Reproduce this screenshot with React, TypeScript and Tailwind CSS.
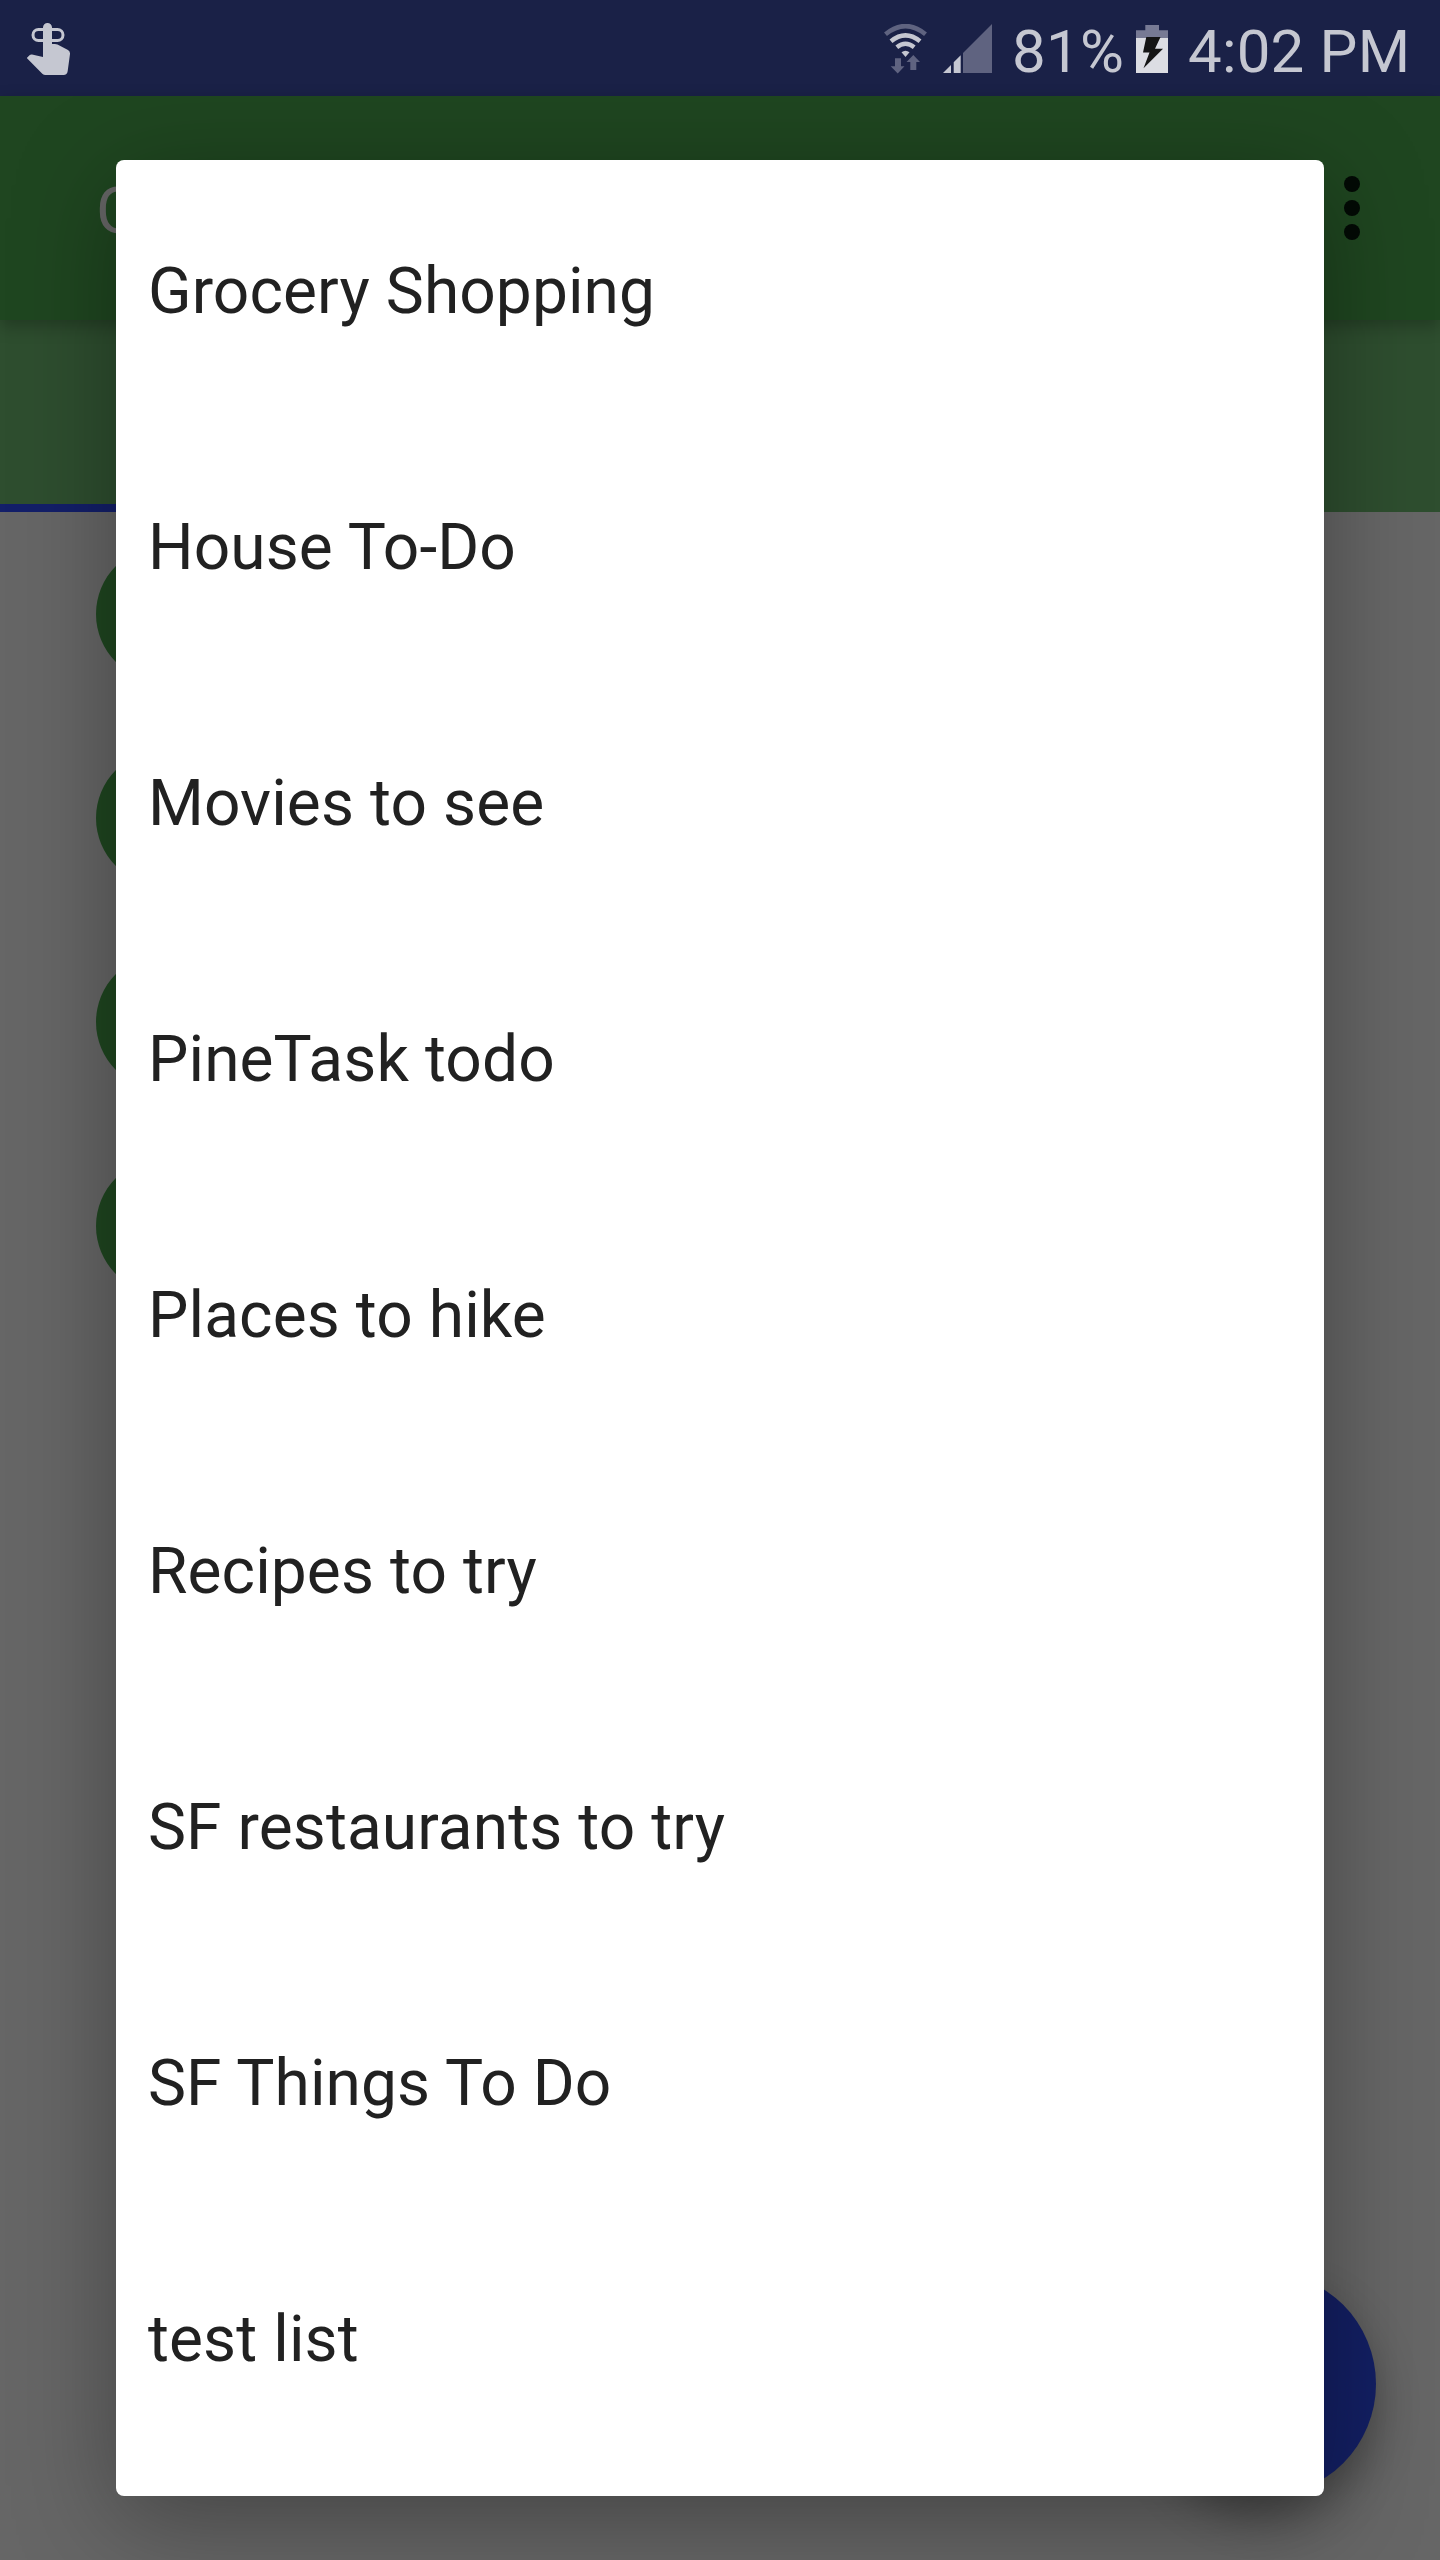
const lists = [
  'Grocery Shopping',
  'House To-Do',
  'Movies to see',
  'PineTask todo',
  'Places to hike',
  'Recipes to try',
  'SF restaurants to try',
  'SF Things To Do',
  'test list',
];

function ReminderIcon() {
  return (
    <svg className="h-[54px] w-[44px]" viewBox="27 22 44 54" fill="none">
      <path
        d="M43 29.5H38.5A5.5 5.5 0 0 0 38.5 40.5H57.5A5.5 5.5 0 0 0 57.5 29.5H52"
        stroke="#c5c7d1"
        strokeWidth="3"
      />
      <path
        d="M43 57V27.5A4.5 4.5 0 0 1 52 27.5V44H55Q56 44 57.500 44.600L68 50Q70.300 51.400 70 54L67.700 71Q67.200 75 63.500 75H45.500Q43.700 75 42.300 73.700L26.800 58L29.500 55.200Q30.500 54.300 32 54.500Z"
        fill="#c5c7d1"
      />
    </svg>
  );
}

function WifiIcon() {
  return (
    <svg className="h-[50px] w-[43px]" viewBox="884 24 43 50" fill="none">
      <path d="M885.500 34.200Q905.500 18 925.500 34.200" stroke="#5f6380" strokeWidth="4.600" />
      <path d="M891 41.200Q905.500 29.500 920 41.200" stroke="#c5c7d1" strokeWidth="4.600" />
      <path d="M896.800 47.300Q905.500 40.300 914.200 47.300" stroke="#c5c7d1" strokeWidth="4.400" />
      <path d="M901.500 52.300Q905.500 49 909.500 52.300L905.500 57Z" fill="#c5c7d1" />
      <path
        d="M895 58.300H901V66.300H904.500L897.700 73.500L890.700 66.300H895ZM913.300 55L920 62H916.300V70H910.300V62H906.500Z"
        fill="#5f6380"
      />
    </svg>
  );
}

function SignalIcon() {
  return (
    <svg className="h-[49px] w-[49px]" viewBox="943 24 49 49">
      <path d="M963 53L992 24V73H963Z" fill="#5f6380" />
      <path d="M943 73L951 65V73ZM953.700 62.300L960.700 55.300V73H953.700Z" fill="#c5c7d1" />
    </svg>
  );
}

function BatteryIcon() {
  return (
    <svg className="h-[48px] w-[32px]" viewBox="1136 25 32 48">
      <path d="M1145.300 25H1159V30.300H1168V38H1136V30.300H1145.300Z" fill="#777a94" />
      <path d="M1136 38H1168V73H1136Z" fill="#dcdde3" />
      <path d="M1146.300 37H1160.500L1155 48.700H1163L1143.500 68.300L1149.500 52.500H1143Z" fill="#151515" />
    </svg>
  );
}

function StatusBar() {
  return (
    <header className="flex h-24 shrink-0 bg-[#1a2147] pl-[27px] pr-[30px] text-[60px] leading-[72px] text-[#c5c7d1]">
      <div className="mt-[22px]">
        <ReminderIcon />
      </div>
      <div className="ml-auto flex">
        <div className="mr-4 mt-6">
          <WifiIcon />
        </div>
        <div className="mt-6">
          <SignalIcon />
        </div>
        <span className="ml-[20px] mt-4 w-[124px] whitespace-nowrap tracking-[0.3px]">81%</span>
        <div className="mt-[25px]">
          <BatteryIcon />
        </div>
        <span className="ml-5 mt-4 w-[222px] whitespace-nowrap tracking-[0.2px]">4:02 PM</span>
      </div>
    </header>
  );
}

export default function App() {
  return (
    <div className="relative flex h-[2560px] w-[1440px] flex-col overflow-hidden bg-[#666666] font-['Roboto',sans-serif]">
      <StatusBar />
      <div className="relative z-10 flex h-56 shrink-0 items-center justify-between bg-[#1f4620] pl-24 pr-20 shadow-[0_6px_16px_rgba(0,0,0,0.25)]">
        <span className="pt-1.5 text-[64px] leading-[75px] text-[#666666]">G</span>
        <div className="flex flex-col gap-2">
          <i className="size-4 rounded-full bg-[#030a05]" />
          <i className="size-4 rounded-full bg-[#030a05]" />
          <i className="size-4 rounded-full bg-[#030a05]" />
        </div>
      </div>
      <div className="flex h-48 shrink-0 items-end bg-[#2e4e2f]">
        <div className="h-2 w-1/2 bg-[#131f69]" />
      </div>
      <main className="flex flex-col gap-[68px] pl-24 pt-[34px]">
        <div className="size-[136px] rounded-full bg-[#1f4620]" />
        <div className="size-[136px] rounded-full bg-[#1f4620]" />
        <div className="size-[136px] rounded-full bg-[#1f4620]" />
        <div className="size-[136px] rounded-full bg-[#1f4620]" />
      </main>
      <div className="absolute bottom-16 right-16 size-56 rounded-full bg-[#131f63] shadow-[0_20px_44px_rgba(0,0,0,0.32)]" />
      <div className="absolute inset-x-0 bottom-0 top-24 z-20 overflow-hidden">
        <ul className="mx-[116px] mt-16 h-[2336px] rounded-lg bg-white shadow-[0_24px_100px_rgba(0,0,0,0.34)]">
          {lists.map((name) => (
            <li
              key={name}
              className="flex h-64 items-center pl-8 pt-1.5 text-[64px] leading-[75px] tracking-[0.1px] text-[#212121]"
            >
              {name}
            </li>
          ))}
        </ul>
      </div>
    </div>
  );
}
